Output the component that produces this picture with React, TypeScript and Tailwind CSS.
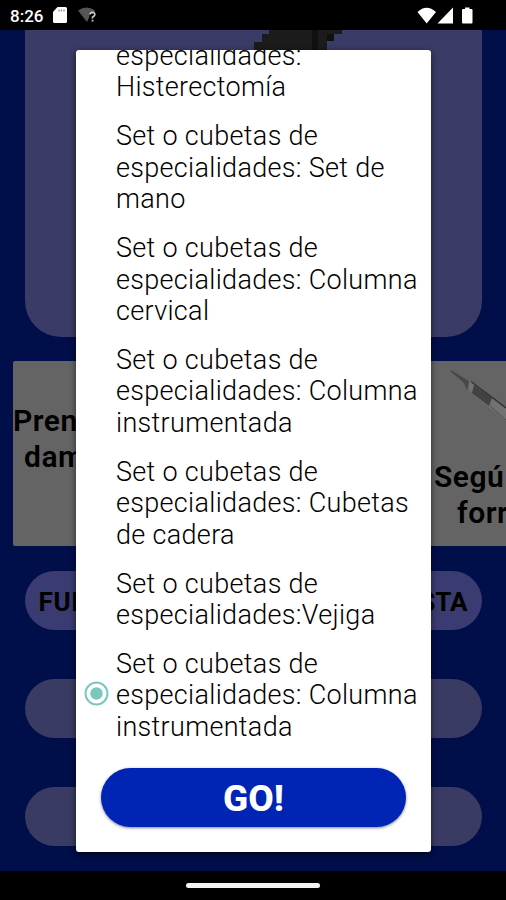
const options: string[] = [
  "especialidades: Histerectomía",
  "Set o cubetas de especialidades: Set de mano",
  "Set o cubetas de especialidades: Columna cervical",
  "Set o cubetas de especialidades: Columna instrumentada",
  "Set o cubetas de especialidades: Cubetas de cadera",
  "Set o cubetas de especialidades:Vejiga",
]

const selected = "Set o cubetas de especialidades: Columna instrumentada"

// Android status bar
const StatusBar = () => (
  <div className="flex h-[30px] shrink-0 items-center bg-black pl-[10px] pr-[31px] text-white">
    <span className="w-[43px] pt-[1px] text-[17px] font-medium leading-[30px]">8:26</span>
    <svg className="h-[16px] w-[14px]" viewBox="0 0 14 16">
      <path d="M4.5 0H12.5Q14 0 14 1.5V14.5Q14 16 12.5 16H1.5Q0 16 0 14.5V5Z" fill="#fff" />
      <path d="M6 2.5v2M8.5 2.5v2M11 2.5v2" stroke="#999" strokeWidth="1.4" />
    </svg>
    <svg className="ml-[11px] h-[16px] w-[19px]" viewBox="0 0 19 16">
      <path d="M0 3.5Q8.500 -2.500 17 3.500L15.500 5.500Q11 5 11.500 9.500L9 15Z" fill="#555" />
      <path d="M12 7.500Q12.300 5.300 14.500 5.300Q17 5.500 16.800 7.700Q16.500 9 14.500 10.300V11.500M14.500 12.800V14.500" fill="none" stroke="#ccc" strokeWidth="1.700" />
    </svg>
    <div className="ml-auto flex items-center">
      <svg className="h-[17px] w-[58px]" viewBox="0 0 58 17">
        <path d="M0.500 5Q9.500 -3.500 19 5L9.700 16.500Z" fill="#fff" />
        <path d="M20.500 16.500L36 0.500V16.500Z" fill="#fff" />
        <path d="M48 0.500H52.500V2H54.500Q55.500 2 55.500 3V15.500Q55.500 16.500 54.500 16.500H46Q45 16.500 45 15.500V3Q45 2 46 2H48Z" fill="#fff" />
      </svg>
    </div>
  </div>
)

const Scalpel = () => (
  <svg className="h-[64px] w-[62px]" viewBox="0 0 62 64">
    <path d="M6 10L8 9.500L22 18.500L25 20L27 29L23 28L19 21Z" fill="#484848" />
    <path d="M25 20L28 20L62 46V60L28 32L24 28Z" fill="#727272" />
    <path d="M30 24L48 37L45 45L28 32Z" fill="#424242" />
    <path d="M27 20.500L62 47" stroke="#303030" strokeWidth="1.500" />
    <path d="M46 45L62 59" stroke="#4d4d4d" strokeWidth="1" />
  </svg>
)

// Screen behind the dialog
const Background = () => (
  <main className="flex flex-1 flex-col overflow-hidden bg-[#000e49]">
    <div className="mx-auto flex h-[307px] w-[457px] shrink-0 justify-center rounded-b-[36px] bg-[#3a3b66]">
      <svg className="ml-[90px] h-[20px] w-[88px]" viewBox="0 0 88 20">
        <path d="M15 0H88V4H80V11H73V20H0V12H8V4H15Z" fill="#1b1b1b" />
        <path d="M58 0H64V20H58ZM73 4H80V11H73Z" fill="#101010" />
      </svg>
    </div>

    <div className="mt-[24px] flex h-[185px] shrink-0 gap-[10px] pl-[13px] text-[30px] font-semibold leading-[36px] tracking-[0.500px] text-black">
      <div className="w-[205px] shrink-0 rounded-[2px] bg-[#646464] pt-[42px]">
        <p>Pren</p>
        <p className="pl-[11px]">dam</p>
      </div>
      <div className="flex-1 bg-[#646464] pl-[216px]">
        <Scalpel />
        <p className="-ml-[10px] mt-[34px]">Segú</p>
        <p className="ml-[13px]">forr</p>
      </div>
    </div>

    <div className="mt-[25px] flex flex-col items-center gap-[49px]">
      <div className="flex h-[59px] w-[457px] items-center justify-between rounded-full bg-[#3a3b70] px-[14px] pt-[3px] text-[26px] font-bold text-black">
        <span className="tracking-[0.800px]">FUN</span>
        <span>STA</span>
      </div>
      <div className="h-[59px] w-[457px] rounded-full bg-[#3a3b62]" />
      <div className="h-[59px] w-[457px] rounded-full bg-[#3a3b62]" />
    </div>
  </main>
)

const Option = ({ label, checked }: { label: string; checked?: boolean }) => (
  <li className="flex items-center pl-[7.500px]">
    <span className="flex w-[32.500px] shrink-0 pb-[6px]">
      {checked && (
        <svg className="h-[25px] w-[25px]" viewBox="0 0 25 25">
          <circle cx="12.500" cy="12.500" r="11" fill="none" stroke="#7ac8bd" strokeWidth="2" />
          <circle cx="12.500" cy="12.500" r="6.200" fill="#7ac8bd" />
        </svg>
      )}
    </span>
    <span className="w-[310px] text-[27px] font-[350] leading-[31.700px] tracking-[0.320px] text-black">{label}</span>
  </li>
)

export default function App() {
  return (
    <div className="relative flex h-[900px] w-[506px] flex-col overflow-hidden font-['Roboto',sans-serif]">
      <StatusBar />
      <Background />
      <div className="flex h-[29px] shrink-0 items-center justify-center bg-black">
        <div className="h-[5px] w-[134px] rounded-full bg-[#f2f2f2]" />
      </div>

      {/* Dialog */}
      <div className="absolute left-[76px] top-[49.500px] flex h-[802px] w-[355px] flex-col overflow-hidden rounded-[3px] bg-white shadow-[0_2px_6px_rgba(0,0,0,0.6)]">
        <ul className="-mt-[8.800px] flex flex-col gap-[16.800px]">
          {options.map((label) => (
            <Option key={label} label={label} />
          ))}
          <Option label={selected} checked />
        </ul>
        <button className="mx-auto mt-[24.500px] h-[59px] w-[305px] shrink-0 rounded-full bg-[#0024b3] text-[37px] font-extrabold leading-[61px] text-white shadow-[0_1px_3px_rgba(0,0,60,0.5)]">
          GO!
        </button>
      </div>
    </div>
  )
}
